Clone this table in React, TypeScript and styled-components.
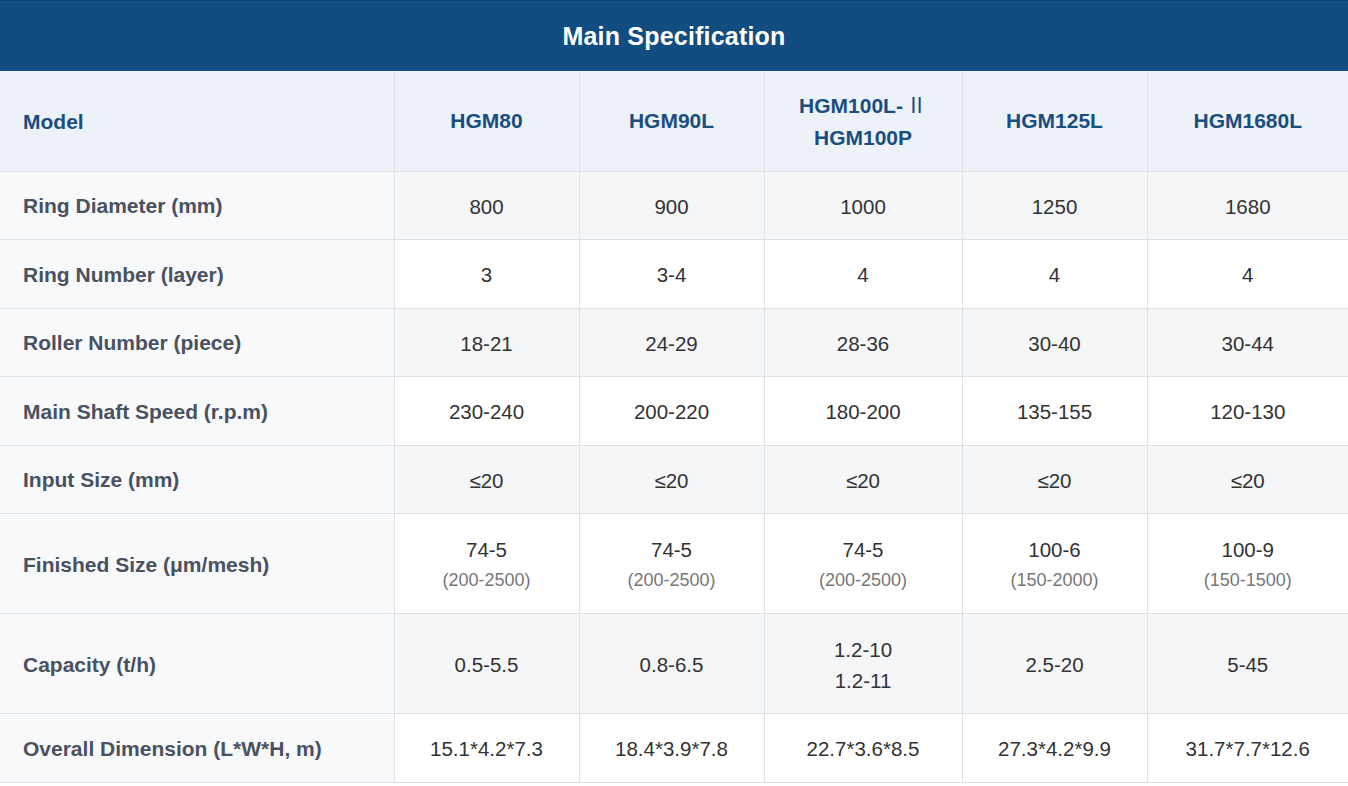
import React from "react";
import styled, { createGlobalStyle } from "styled-components";

const Global = createGlobalStyle`
  html, body { margin: 0; padding: 0; background: #ffffff; }
  body { font-family: "Liberation Sans", Arial, sans-serif; }
`;

const Wrapper = styled.div`
  width: 1348px;
`;

const Title = styled.div`
  height: 70px;
  border-top: 1px solid #0c3f6b;
  background: #114d80;
  color: #ffffff;
  font-weight: 700;
  font-size: 25px;
  display: flex;
  align-items: center;
  justify-content: center;
  letter-spacing: 0.2px;
`;

const Table = styled.table`
  width: 1348px;
  border-collapse: collapse;
  table-layout: fixed;
`;

const HeadRow = styled.tr`
  height: 100px;
  background: #edf2f8;
`;

const Row = styled.tr<{ $tall?: boolean; $shade?: boolean }>`
  height: ${(p) => (p.$tall ? "100px" : "68.5px")};
  background: ${(p) => (p.$shade ? "#f4f6f8" : "#ffffff")};
`;

const Cell = styled.td`
  border: 1px solid #dfe3e8;
  border-top: none;
  text-align: center;
  vertical-align: middle;
  font-size: 20.5px;
  color: #333333;
  line-height: 31px;
  padding: 2px 4px 0;
  &:first-child { border-left: none; }
  &:last-child { border-right: none; }
`;

const Label = styled.th<{ $head?: boolean }>`
  border-bottom: 1px solid #dfe3e8;
  border-right: 1px solid #dfe3e8;
  text-align: left;
  padding: 2px 0 0 23px;
  font-size: 21px;
  font-weight: 700;
  color: ${(p) => (p.$head ? "#1a4e7f" : "#4a5160")};
  background: ${(p) => (p.$head ? "#edf2f8" : "#f7f9fb")};
`;

const ModelCell = styled.th`
  border: 1px solid #dfe3e8;
  border-top: none;
  text-align: center;
  font-size: 21px;
  font-weight: 700;
  color: #1a4e7f;
  line-height: 32px;
  padding-top: 2px;
  &:last-child { border-right: none; }
`;

const Roman = styled.span`
  font-family: "Noto Sans CJK SC", "Noto Sans CJK JP", sans-serif;
  font-weight: 400;
  margin-left: 3px;
`;

const Sub = styled.div`
  font-size: 18px;
  color: #777777;
`;

type Val = string | [string, string];

const models: Val[] = ["HGM80", "HGM90L", ["HGM100L-", "HGM100P"], "HGM125L", "HGM1680L"];

const rows: { label: string; values: Val[]; tall?: boolean; sub?: boolean }[] = [
  { label: "Ring Diameter (mm)", values: ["800", "900", "1000", "1250", "1680"] },
  { label: "Ring Number (layer)", values: ["3", "3-4", "4", "4", "4"] },
  { label: "Roller Number (piece)", values: ["18-21", "24-29", "28-36", "30-40", "30-44"] },
  { label: "Main Shaft Speed (r.p.m)", values: ["230-240", "200-220", "180-200", "135-155", "120-130"] },
  { label: "Input Size (mm)", values: ["≤20", "≤20", "≤20", "≤20", "≤20"] },
  {
    label: "Finished Size (μm/mesh)",
    tall: true,
    sub: true,
    values: [
      ["74-5", "(200-2500)"],
      ["74-5", "(200-2500)"],
      ["74-5", "(200-2500)"],
      ["100-6", "(150-2000)"],
      ["100-9", "(150-1500)"],
    ],
  },
  { label: "Capacity (t/h)", tall: true, values: ["0.5-5.5", "0.8-6.5", ["1.2-10", "1.2-11"], "2.5-20", "5-45"] },
  {
    label: "Overall Dimension (L*W*H, m)",
    values: ["15.1*4.2*7.3", "18.4*3.9*7.8", "22.7*3.6*8.5", "27.3*4.2*9.9", "31.7*7.7*12.6"],
  },
];

const widths = [394, 185, 185, 198, 185, 201];

export default function App() {
  return (
    <Wrapper>
      <Global />
      <Title>Main Specification</Title>
      <Table>
        <colgroup>
          {widths.map((w, i) => (
            <col key={i} style={{ width: w }} />
          ))}
        </colgroup>
        <thead>
          <HeadRow>
            <Label $head>Model</Label>
            {models.map((m, i) => (
              <ModelCell key={i}>
                {Array.isArray(m) ? (
                  <>
                    {m[0]}
                    <Roman>Ⅱ</Roman>
                    <br />
                    {m[1]}
                  </>
                ) : (
                  m
                )}
              </ModelCell>
            ))}
          </HeadRow>
        </thead>
        <tbody>
          {rows.map((r, ri) => (
            <Row key={ri} $tall={r.tall} $shade={ri % 2 === 0}>
              <Label>{r.label}</Label>
              {r.values.map((v, vi) => (
                <Cell key={vi}>
                  {Array.isArray(v) ? (
                    r.sub ? (
                      <>
                        <div>{v[0]}</div>
                        <Sub>{v[1]}</Sub>
                      </>
                    ) : (
                      <>
                        <div>{v[0]}</div>
                        <div>{v[1]}</div>
                      </>
                    )
                  ) : (
                    v
                  )}
                </Cell>
              ))}
            </Row>
          ))}
        </tbody>
      </Table>
    </Wrapper>
  );
}
